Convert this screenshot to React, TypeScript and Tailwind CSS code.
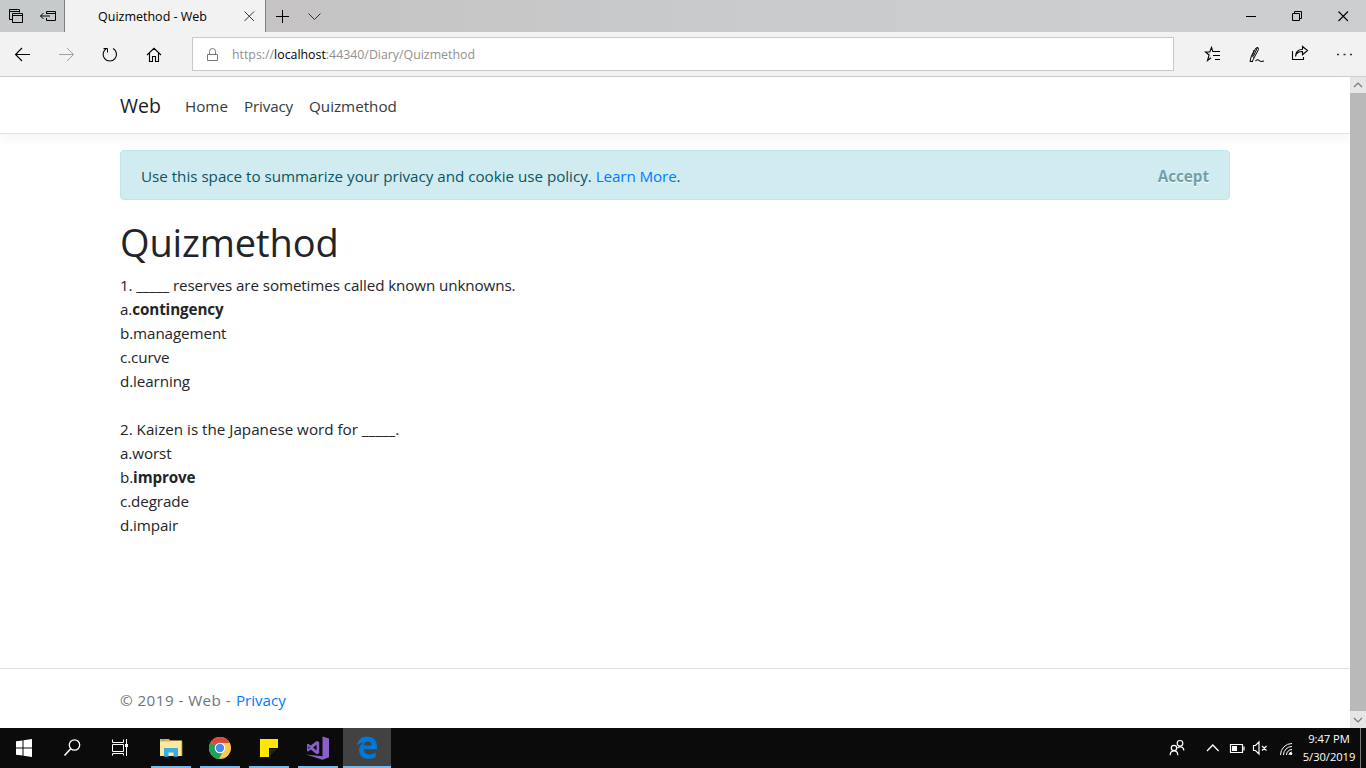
import React from "react";

type IconProps = { box: string; cls: string; children: React.ReactNode };

function Icon({ box, cls, children }: IconProps) {
  return (
    <svg viewBox={box} className={`block shrink-0 fill-none ${cls}`} stroke="currentColor" strokeWidth="1">
      {children}
    </svg>
  );
}

function TitleBar() {
  return (
    <div className="flex h-8 shrink-0 bg-[#cbcccd] text-black">
      <div className="flex w-[65px] border-r border-[#7d7f80] bg-[#c6cacb]">
        <Icon box="0 0 64 32" cls="h-8 w-16">
          <path d="M12.5 19.5h-3v-10h10v3M9.5 11.5h10" />
          <path d="M12.5 13.5h10v9h-10zM12.5 15.5h10" />
          <path d="M46.500 14V11.500h9v9h-9V18M46.500 13.500h9M40.500 16h9.500M43.500 13l-3 3 3 3" />
        </Icon>
      </div>
      <div className="flex w-[201px] items-center border-r border-[#7d7f80] bg-[#f2f2f2]">
        <span className="w-[178px] pt-px pl-[33px] text-[12.5px] leading-4 whitespace-pre">Quizmethod - Web</span>
        <Icon box="243 0 22 32" cls="h-8 w-[22px] text-[#333]">
          <path d="M244.500 11.500l9.500 9.500M254 11.500l-9.500 9.500" />
        </Icon>
      </div>
      <div className="flex flex-1 bg-linear-to-r from-[#c5c3c4] via-[#c9cbcc] to-[#cdcecf]">
        <Icon box="266 0 64 32" cls="h-8 w-16">
          <path d="M276 16.500h13M282.500 10v13" />
          <path d="M308.500 13.500l6 6 6-6" className="text-[#333]" />
        </Icon>
      </div>
      <Icon box="1230 0 136 32" cls="h-8 w-[136px] bg-[#cdcecf]">
        <path d="M1246 16.500h10" />
        <path d="M1292.500 13.500h7v7h-7zM1294.500 13.500v-2h7v7h-2" />
        <path d="M1338.500 11.500l9.500 9.500M1348 11.500l-9.500 9.500" strokeWidth="1.100" />
      </Icon>
    </div>
  );
}

function Toolbar() {
  return (
    <div className="flex h-[45px] shrink-0 items-center border-b border-[#cfcfcf] bg-[#f2f2f2] text-black">
      <Icon box="0 32 192 44" cls="h-11 w-48">
        <path d="M15.500 54.500H30M22 48l-6.500 6.500L22 61" strokeWidth="1.100" />
        <path d="M59 54.500h14.500M67 48l6.500 6.500L67 61" stroke="#a0a0a0" />
        <path d="M106.500 48.500a6.700 6.700 0 1 0 6.600 0" strokeWidth="1.100" />
        <path d="M103.500 48.500h4v4" />
        <path d="M147 55l7-6.700 7 6.700M149.500 53v8.500h3v-5h3v5h3V53" strokeWidth="1.100" />
      </Icon>
      <div className="flex h-[34px] w-[982px] items-center border border-[#c8c8c8] bg-white">
        <Icon box="193 38 39 32" cls="h-8 w-[39px] text-[#777]">
          <path d="M207.500 54.500h10v6h-10zM209.500 54.500v-3a3 3 0 0 1 6 0v3" />
        </Icon>
        <span className="pt-0.5 text-[12.350px] leading-4 whitespace-pre text-[#919191]">
          https://<span className="text-black">localhost</span>:44340/Diary/Quizmethod
        </span>
      </div>
      <Icon box="1174 32 192 44" cls="h-11 w-48">
        <path d="M1214 51.500h-1.200L1211.500 47.500l-1.700 4.500h-4.300l3.600 3-1.600 5.500 3.500-2.700M1213 51.500h7M1213 55.500h7M1215 59.500h5" strokeWidth="1.100" />
        <path d="M1250 61.500l1.500-6 4.500-7.500 2-.500.500 2-4 7.500-2 4M1254 50l-1.500 6.500 1.500 1M1257.500 47.500l-4 8.500M1250 61.500h3" />
        <path d="M1255.500 61c1.500-1.500 2.800-1.500 3.600-.500s2 1.400 4.900.500" strokeWidth="1.100" />
        <path d="M1292.500 51v8.500h11V57M1295.500 56.500c.5-3.500 3-5 7-5v3.200l5-4.200-5-4v2.700c-4.500.300-7 2.500-7 7.300z" strokeWidth="1.100" />
        <path d="M1337 54.500h2M1343.500 54.500h2M1350 54.500h2" strokeWidth="1.600" stroke="#333" />
      </Icon>
    </div>
  );
}

function Question({ text, options }: { text: React.ReactNode; options: { key: string; label: string; right?: boolean }[] }) {
  return (
    <div className="mb-6">
      <p>{text}</p>
      {options.map((o) => (
        <p key={o.key}>
          {o.key}.{o.right ? <b>{o.label}</b> : o.label}
        </p>
      ))}
    </div>
  );
}

function Page() {
  return (
    <div className="flex min-w-0 flex-1 flex-col bg-white text-[15.200px] leading-6 text-[#212529]">
      <nav className="flex h-[57px] shrink-0 items-center border-b border-[#dee2e6] px-[120px] pt-0.5 text-[#343a40] shadow-[0_4px_12px_rgba(0,0,0,0.05)]">
        <span className="w-[65px] text-[19.500px] text-[#1c1c1c]">Web</span>
        <span className="w-[59px]">Home</span>
        <span className="w-[65px] tracking-[-0.15px]">Privacy</span>
        <span>Quizmethod</span>
      </nav>
      <main className="flex-1 px-[120px] pt-4">
        <div className="flex h-[50px] items-center rounded border border-[#bee5eb] bg-[#d1ecf1] px-5 pt-px text-[#0c5460]">
          <p className="flex-1 tracking-[-0.015px] whitespace-pre">
            Use this space to summarize your privacy and cookie use policy. <a className="tracking-[-0.1px] text-[#007bff]">Learn More</a>.
          </p>
          <b className="text-[#6fa0a8] [text-shadow:0_1px_0_#fff]">Accept</b>
        </div>
        <h1 className="mt-[18px] mb-[7px] text-[38px] leading-[48px] tracking-[-0.12px]">Quizmethod</h1>
        <div className="tracking-[-0.1px]">
          <Question
            text="1. _____ reserves are sometimes called known unknowns."
            options={[
              { key: "a", label: "contingency", right: true },
              { key: "b", label: "management" },
              { key: "c", label: "curve" },
              { key: "d", label: "learning" },
            ]}
          />
          <Question
            text={<span className="tracking-normal">2. Kaizen is the Japanese word for _____.</span>}
            options={[
              { key: "a", label: "worst" },
              { key: "b", label: "improve", right: true },
              { key: "c", label: "degrade" },
              { key: "d", label: "impair" },
            ]}
          />
        </div>
      </main>
      <footer className="flex h-[60px] shrink-0 items-center border-t border-[#dee2e6] px-[120px] pt-0.5 text-[#6c757d]">
        <span className="w-[116px] tracking-[0.45px] whitespace-pre">© 2019 - Web - </span>
        <a className="tracking-[-0.05px] text-[#007bff]">Privacy</a>
      </footer>
    </div>
  );
}

function Scrollbar() {
  return (
    <div className="flex w-4 shrink-0 flex-col bg-[#b9b9b9] text-[#777]">
      <Icon box="0 0 16 16" cls="h-4 w-4 bg-[#e6e6e6]">
        <path d="M4 10l4-4 4 4" strokeWidth="1.2" />
      </Icon>
      <div className="flex-1" />
      <Icon box="0 0 16 17" cls="h-[17px] w-4 bg-[#e6e6e6]">
        <path d="M4 7l4 4 4-4" strokeWidth="1.2" />
      </Icon>
    </div>
  );
}

function AppButton({ children, active }: { children: React.ReactNode; active?: boolean }) {
  return (
    <div className={`flex h-10 shrink-0 flex-col items-center ${active ? "w-12 bg-[#424242]" : "ml-2 mr-px w-10"}`}>
      <svg viewBox="0 0 40 38" className="h-[38px] w-10 shrink-0">{children}</svg>
      <div className="h-0.5 w-full shrink-0 bg-[#76b9ed]" />
    </div>
  );
}

function Taskbar() {
  return (
    <div className="flex h-10 shrink-0 bg-[#0b0b0b] text-white">
      <Icon box="0 728 143 40" cls="h-10 w-[143px]">
        <path d="M16 741.300l6.500-.900v7.100H16zM23.500 740.200l8.500-1.200v8.500h-8.500zM16 748.500h6.500v7.100l-6.500-.900zM23.500 748.500H32v8.500l-8.500-1.200z" fill="white" stroke="none" />
        <circle cx="74.500" cy="745" r="5.200" strokeWidth="1.300" />
        <path d="M70.700 748.800l-6.200 6.700" strokeWidth="1.600" />
        <path d="M112.500 739.500v3h11v-3M112.500 744.500h11v7h-11zM112.500 755.500v-2h11v2M126.500 739v17" />
        <path d="M125 744h3v3h-3z" fill="white" stroke="none" />
      </Icon>
      <AppButton>
        <path d="M9 12.500V28h22V12.500H18.500L17 11H10.500L9 12.500z" fill="#ffe79b" />
        <path d="M9 12.500V11h9l1.500 2.500h-10z" fill="#e9b33b" />
        <path d="M11 11.500h2.500v1.300H11z" fill="#3db5e6" />
        <path d="M30 13.500h1.300V28H30z" fill="#dfb84f" />
        <path d="M13 28.800V20h14v8.800h-4.500v-4.300h-5v4.300z" fill="#37afe5" />
      </AppButton>
      <AppButton>
        <circle cx="20" cy="20" r="11" fill="#f9cb4b" />
        <path d="M20 20L10.500 14.500A11 11 0 0 0 19 31l4.500-9z" fill="#22a15b" />
        <path d="M20 20L10.500 14.500A11 11 0 0 1 29.800 15H20z" fill="#d94b3f" />
        <circle cx="20" cy="20" r="5.300" fill="white" />
        <circle cx="20" cy="20" r="4.200" fill="#4688f4" />
      </AppButton>
      <AppButton>
        <path d="M11 11h18v9h-9v9h-9z" fill="#ffe600" />
        <path d="M20 29v-9h9z" fill="#0b0b0b" />
        <path d="M21 28v-7h7z" fill="#ffe600" opacity="0.12" />
      </AppButton>
      <AppButton>
        <path d="M24.500 8.500l6.500 2v18.700l-6.500 2.500L8 26.500l16.500 1.700z" fill="#8960ca" />
        <path d="M18.700 13l2.500 1v11.300l-2.500 1-6-4.800-2.500 2-1.200-.600v-6.600l1.200-.600 2.500 1.900zM10.500 17.900v3.400l1.300-1.700zM18.600 16.700l-3.600 2.900 3.600 2.900z" fill="#8960ca" fillRule="evenodd" />
      </AppButton>
      <div className="ml-1 flex">
        <AppButton active>
          <path d="M10 17.500C11 11.500 15 8.500 20.200 8.500c6.500 0 9.800 4.500 9.800 10v2.700H16.500c.2 3.700 3 5.200 6 5.200 2.300 0 4.300-.600 6.200-1.700v4.500c-2.200 1.200-4.600 1.600-7 1.600-6.200 0-9.600-3.600-9.600-8.600 0-3.800 2-6.800 5.300-8.200-2.800.300-5.500 1.600-7.400 3.500zM16.700 17.400h7.900c0-2.600-1.500-3.900-3.700-3.900-2.300 0-3.700 1.500-4.200 3.900z" fill="#0078d7" />
        </AppButton>
      </div>
      <div className="flex-1" />
      <Icon box="1160 728 140 40" cls="h-10 w-[140px]">
        <circle cx="1180" cy="743.300" r="2.800" strokeWidth="1.200" />
        <path d="M1177.500 748c2-2 6.300-1.500 6.300 2.500" strokeWidth="1.200" />
        <circle cx="1174" cy="748" r="2.700" strokeWidth="1.200" />
        <path d="M1170.200 755.200c0-5.800 7.600-5.800 7.600 0" strokeWidth="1.200" />
        <path d="M1207 751l5.800-6 5.800 6" strokeWidth="1.300" />
        <path d="M1230.500 744.500h12v8h-12zM1244 746.500v4" strokeWidth="1.200" />
        <path d="M1232 746h5v5h-5z" fill="white" stroke="none" />
        <path d="M1253.500 745.500h2l3.500-3.500v12l-3.500-3.500h-2zM1262 746l4.500 4.500M1266.500 746l-4.500 4.500" strokeWidth="1.150" />
        <path d="M1280.500 755a11.500 11.500 0 0 1 11.500-11.500M1283.500 755a8.500 8.500 0 0 1 8.500-8.500M1286.500 755a5.500 5.500 0 0 1 5.500-5.500M1289 755a3 3 0 0 1 3-3" />
        <circle cx="1291" cy="753.700" r="1.300" fill="white" stroke="none" />
      </Icon>
      <div className="flex w-[61px] flex-col items-center border-r border-[#777] pr-1.5 pl-1 pt-[2px] text-[11.200px] leading-[18px] tracking-[-0.06px]">
        <span>9:47 PM</span>
        <span>5/30/2019</span>
      </div>
      <div className="w-[5px]" />
    </div>
  );
}

export default function App() {
  return (
    <div className="flex h-[768px] w-[1366px] flex-col overflow-hidden font-['Open_Sans','Noto_Sans',sans-serif]">
      <TitleBar />
      <Toolbar />
      <div className="flex min-h-0 flex-1">
        <Page />
        <Scrollbar />
      </div>
      <Taskbar />
    </div>
  );
}
